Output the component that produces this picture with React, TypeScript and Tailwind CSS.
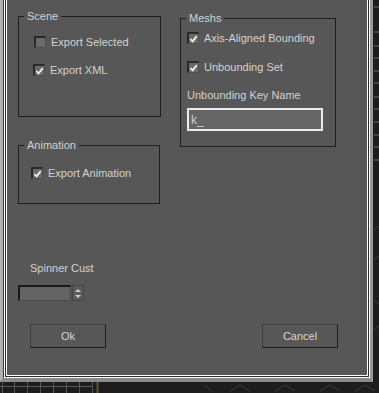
import React from "react";

const Box = ({ checked }: { checked?: boolean }) => (
  <span className="flex h-[12px] w-[12px] shrink-0 items-center justify-center border-t-2 border-l-2 border-t-[#2a2a2a] border-l-[#2a2a2a] border-b border-r border-b-[#4e4e4e] border-r-[#4e4e4e] bg-[#6a6a6a]">
    {checked && (
      <svg width="10" height="10" viewBox="0 0 10 10">
        <path d="M1.5 5 L4 7.6 L8.6 1.8" fill="none" stroke="#f2f2f2" strokeWidth="2" />
      </svg>
    )}
  </span>
);

const Check = ({ label, checked, className }: { label: string; checked?: boolean; className?: string }) => (
  <div className={"flex h-[12px] items-center gap-[5px] " + (className ?? "")}>
    <Box checked={checked} />
    <span className="whitespace-nowrap leading-[14px]">{label}</span>
  </div>
);

const Group = ({ title, className, children }: { title: string; className?: string; children?: React.ReactNode }) => (
  <div className={"relative border border-[#1e1e1e] " + (className ?? "")}>
    <span className="absolute -top-[8px] left-[5px] bg-[#575757] px-[3px] leading-[14px]">{title}</span>
    {children}
  </div>
);

const Button = ({ label }: { label: string }) => (
  <button className="flex h-[24px] w-[76px] items-center justify-center border border-t-[#3e3e3e] border-l-[#3e3e3e] border-b-[#1c1c1c] border-r-[#1c1c1c] bg-[#575757] text-[#d4d4d4]">
    {label}
  </button>
);

export default function App() {
  const ticks = [7, 32, 46, 58, 71, 83, 97, 109, 122, 135, 147, 160];
  return (
    <div className="flex h-[393px] w-[379px] flex-col overflow-hidden bg-[#1d1d1d] font-['Liberation_Sans',Arial,sans-serif] text-[11px] text-[#d2d2d2]">
      <div className="flex h-[382px]">
        {/* dialog frame */}
        <div className="flex w-[373px] border-l-[3px] border-r-[3px] border-b-[4px] border-l-[#b0b0b0] border-r-[#9a9a9a] border-b-[#8a8a8a]">
          <div className="flex flex-1 border-l border-l-[#3a3a3a]">
            <div className="flex flex-1 border-l border-r border-b border-white">
              <div className="flex flex-1 border-l border-r border-b border-[#2c2c2c]">
                <div className="flex flex-1 border-l border-r border-b border-white">
                  <div className="flex w-[360px] flex-col bg-[#575757]">
                    <div className="flex items-start pl-[11px]">
                      <div className="flex flex-col pt-[16px]">
                        <Group title="Scene" className="h-[101px] w-[143px] pt-[19px]">
                          <Check label="Export Selected" className="ml-[15px]" />
                          <Check label="Export XML" checked className="ml-[14px] mt-[16px]" />
                        </Group>
                        <Group title="Animation" className="mt-[28px] h-[59px] w-[142px] pt-[21px]">
                          <Check label="Export Animation" checked className="ml-[12px]" />
                        </Group>
                      </div>
                      <Group title="Meshs" className="ml-[19px] mt-[18px] h-[129px] w-[156px] pt-[13px]">
                        <Check label="Axis-Aligned Bounding" checked className="ml-[6px]" />
                        <Check label="Unbounding Set" checked className="ml-[6px] mt-[17px]" />
                        <div className="ml-[6px] mt-[15px] leading-[14px]">Unbounding Key Name</div>
                        <div className="ml-[6px] mt-[6px] flex h-[23px] w-[136px] items-center border-2 border-[#ececec] bg-[#656565] px-[2px] text-[12px] text-[#d0d0d0]">
                          k_
                        </div>
                      </Group>
                    </div>
                    <div className="ml-[23px] mt-[57px] leading-[14px]">Spinner Cust</div>
                    <div className="ml-[11px] mt-[10px] flex h-[16px]">
                      <div className="w-[53px] border-t-2 border-l-2 border-b border-r border-t-[#1a1a1a] border-l-[#1a1a1a] border-b-[#4a4a4a] border-r-[#4a4a4a] bg-[#646464]" />
                      <div className="ml-[1px] flex w-[12px] flex-col items-center justify-center gap-[3px] border border-[#444] bg-[#5a5a5a]">
                        <svg width="6" height="3" viewBox="0 0 6 3">
                          <path d="M0 3 L3 0 L6 3 Z" fill="#d0d0d0" />
                        </svg>
                        <svg width="6" height="3" viewBox="0 0 6 3">
                          <path d="M0 0 L6 0 L3 3 Z" fill="#d0d0d0" />
                        </svg>
                      </div>
                    </div>
                    <div className="mt-[23px] flex justify-between pl-[23px] pr-[29px]">
                      <Button label="Ok" />
                      <Button label="Cancel" />
                    </div>
                  </div>
                </div>
              </div>
            </div>
          </div>
        </div>
        {/* right background strip */}
        <svg width="6" height="382" className="shrink-0">
          {ticks.map((y) => (
            <line key={y} x1="1" y1={y} x2="6" y2={y} stroke="#6a6a6a" strokeWidth="1" />
          ))}
          <path d="M1 230 L6 226 M1 260 L6 256 M1 300 L6 304 M1 330 L6 326" stroke="#3a3a3a" />
        </svg>
      </div>
      {/* bottom background strip */}
      <svg width="379" height="11" className="shrink-0">
        <line x1="0" y1="4.5" x2="92" y2="4.5" stroke="#5a5a5a" />
        {[2, 14, 27, 40, 53, 66, 79, 92].map((x) => (
          <line key={x} x1={x + 0.5} y1="0" x2={x + 0.5} y2="11" stroke="#555" />
        ))}
        <line x1="97.5" y1="0" x2="97.5" y2="11" stroke="#5a5430" strokeWidth="2" />
        <path d="M205 3 L212 9 M230 9 L240 3 L250 9 M275 9 L285 3 L295 9 M320 9 L330 3 L340 9 M355 9 L365 3 L375 9" stroke="#3c3c3c" fill="none" />
      </svg>
    </div>
  );
}
